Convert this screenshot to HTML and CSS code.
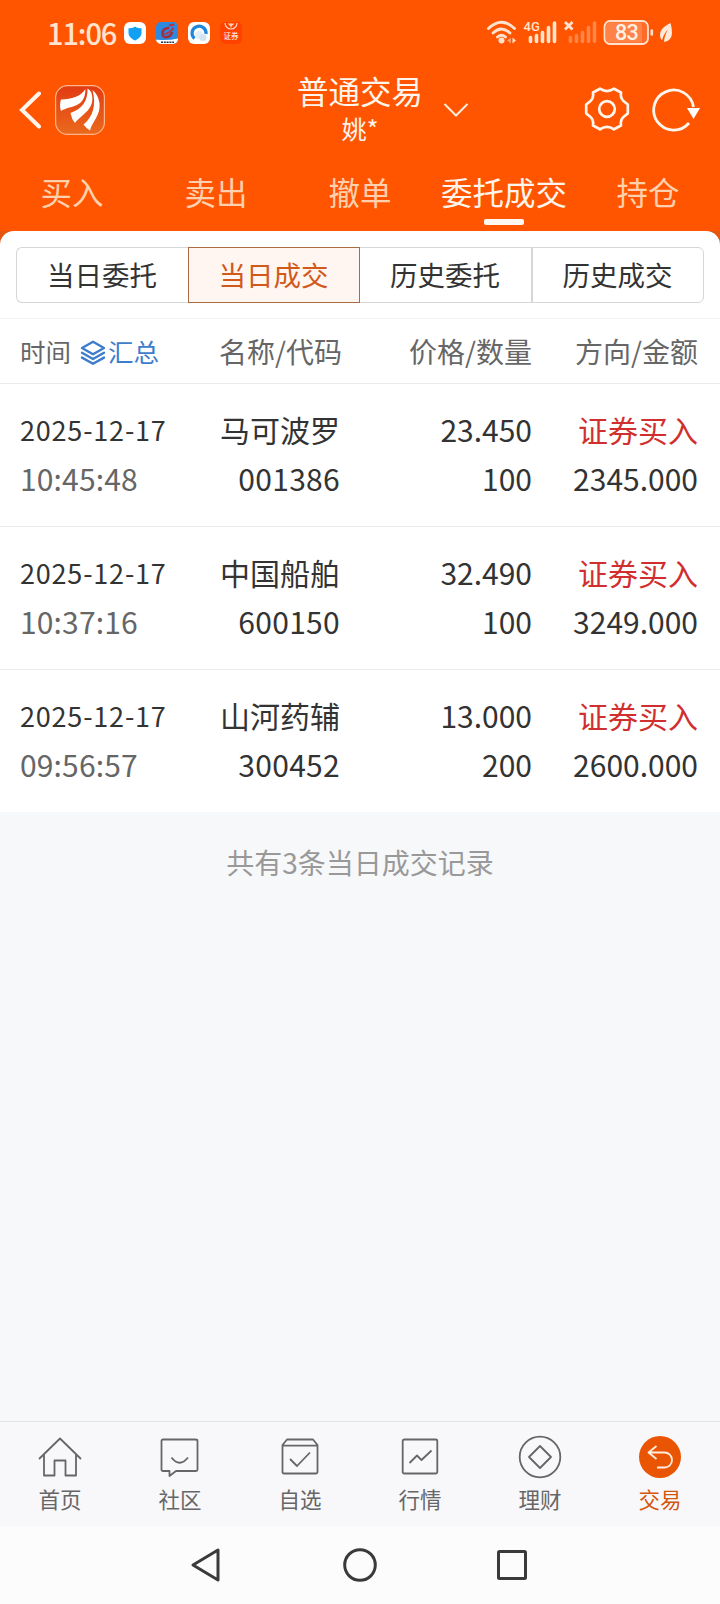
FILE: index.html
```html
<!DOCTYPE html>
<html lang="zh-CN">
<head>
    <meta charset="UTF-8">
    <title>普通交易</title>
    <link rel="stylesheet" href="styles.css">
</head>
<body>
    <div class="app">
        <header class="header">
            <div class="status-bar">
                <div class="status-left">
                    <span class="clock">11:06</span>
                    <svg class="app-icon" viewBox="0 0 22 22">
                        <rect width="22" height="22" rx="6" fill="#fff"/>
                        <path d="M11 4.500C9 6 6.500 6.200 4.500 6.200V11C4.500 14.500 8 17 11 18.500C14 17 17.500 14.500 17.500 11V6.200C15.500 6.200 13 6 11 4.500Z" fill="#12a0f5"/>
                    </svg>
                    <svg class="app-icon" viewBox="0 0 22 22">
                        <rect width="22" height="22" rx="5" fill="#2b8ae0"/>
                        <path d="M0 17.500Q11 19 22 16.500V17a5 5 0 0 1-5 5H5a5 5 0 0 1-5-5Z" fill="#fff"/>
                        <path d="M13 6C8 6 6.500 8.500 6.500 11.500Q6.500 16 11 15Q15.500 14 16 10" fill="none" stroke="#a52c3c" stroke-width="2.500"/>
                        <path d="M8.500 12Q14 11 17.500 6M13 3Q16 4 18 2" fill="none" stroke="#c03038" stroke-width="2"/>
                        <path d="M5 20.200H18" stroke="#234" stroke-width="1.500" stroke-dasharray="2 .8"/>
                    </svg>
                    <svg class="app-icon" viewBox="0 0 22 22">
                        <rect width="22" height="22" rx="6" fill="#fff"/>
                        <path d="M6.500 16.500A7 7 0 1 1 18 12" fill="none" stroke="#2386d8" stroke-width="3.200"/>
                        <circle cx="11" cy="13" r="4" fill="#e3eef6"/>
                        <circle cx="15" cy="15.500" r="3.600" fill="#d3e3f0"/>
                    </svg>
                    <svg class="app-icon" viewBox="0 0 22 22">
                        <rect width="22" height="22" rx="5" fill="#ff4200"/>
                        <path d="M5 1A6 6 0 0 0 17 1M8.500 1.500L11 4L13.500 1.500M11 1V5.500" fill="none" stroke="#ffd9c4" stroke-width="1.100"/>
                        <text x="11" y="16.500" text-anchor="middle" class="icon-text">证券</text>
                    </svg>
                </div>
                <div class="status-right">
                    <svg width="170" height="28" viewBox="0 0 170 28" fill="none" stroke="#ffe3cf" stroke-linecap="round">
                        <path d="M1.500 9.500Q14.500-3 27.500 9.500M6 14Q14.500 6 23 14M10.500 18Q14.500 14.500 18.500 18" stroke-width="2.800"/>
                        <circle cx="14.500" cy="21.500" r="3" fill="#ffe3cf" stroke="none"/>
                        <path d="M24 18.500V24.500L20 21.500Z" fill="#ff9a68" stroke="none"/>
                        <path d="M25.500 18.500L29 21.500L25.500 24.500Z" fill="#ffe3cf" stroke="none"/>
                        <text x="36.500" y="12" class="net-text">4G</text>
                        <path d="M43.500 18.500V22.500M49.500 16.500V22.500M55.500 13.500V22.500M61.500 8.500V22.500M67.500 4V22.500" stroke-width="3.600"/>
                        <path d="M78 3L85.500 10.500M85.500 3L78 10.500" stroke-width="2.800" stroke-linecap="butt"/>
                        <path d="M83.500 18.500V22.500M89.500 16.500V22.500M95.500 13.500V22.500M101.500 8.500V22.500M107.500 4V22.500" stroke="#ff8648" stroke-width="3.600"/>
                        <rect x="117.500" y="2" width="43.500" height="23" rx="5.500" fill="#ff6c29" stroke-width="1.800"/>
                        <path d="M119 7.500Q119 3.500 123 3.500H155V23.500H123Q119 23.500 119 19.500Z" fill="#ff8247" stroke="none"/>
                        <text x="139.500" y="21.300" text-anchor="middle" class="battery-text">83</text>
                        <path d="M164.800 11.500V15.500" stroke-width="2.600"/>
                    </svg>
                    <svg class="leaf" width="14" height="20" viewBox="0 0 14 20">
                        <path d="M11.500 0C7 2.500 1 5.500 1 12Q1 15.500 3 17.500Q4.500 11 9 6.500Q5.500 12 5 19Q13 17.500 13 10Q13 5 11.500 0Z" fill="#ffe9da"/>
                    </svg>
                </div>
            </div>

            <div class="title-bar">
                <div class="title-left">
                    <svg width="22" height="38" viewBox="0 0 22 38">
                        <path d="M20 2.500L3 19L20 35.500" fill="none" stroke="#fff5ec" stroke-width="4" stroke-linecap="round"/>
                    </svg>
                    <svg class="logo" width="50" height="50" viewBox="0 0 50 50">
                        <defs>
                            <linearGradient id="logoBg" x1="0" y1="0" x2="0" y2="1">
                                <stop offset="0" stop-color="#e23a12"/>
                                <stop offset="1" stop-color="#ea6a1c"/>
                            </linearGradient>
                        </defs>
                        <rect x=".6" y=".6" width="48.800" height="48.800" rx="12" fill="url(#logoBg)" stroke="#ffb68a" stroke-width="1.200"/>
                        <path d="M30.500 4C25 12 17 14 6 14.500Q4 20 6 26C15 20 30 24 30.500 4Z" fill="#fff"/>
                        <path d="M32.500 3.500C33 16 27 24 15.500 28Q16.500 34 20 38C27 29 41 24 36.500 8Q35.500 5 32.500 3.500Z" fill="#fff"/>
                        <path d="M37.500 5C41.500 20 38 32 28.500 39.500Q31 43 35 45.500C37 37 46 30 44.500 18Q43 9.500 37.500 5Z" fill="#fff"/>
                    </svg>
                </div>
                <div class="title-center">
                    <div class="title-text">普通交易</div>
                    <div class="account">姚*</div>
                </div>
                <svg class="chevron" width="26" height="16" viewBox="0 0 26 16">
                    <path d="M1.500 2L13 13.500L24.500 2" fill="none" stroke="#ffeede" stroke-width="2"/>
                </svg>
                <div class="title-right">
                    <svg width="46" height="46" viewBox="-23 -22 46 46" fill="none" stroke="#fff5ec" stroke-width="2.700" stroke-linejoin="round">
                        <path d="M20.800-4.500V4.500L17 7.500Q13 11 14 16.500L7 20.300Q0 15.500-7 20.300L-14 16.500Q-13 11-17 7.500L-20.800 4.500V-4.500L-17-7.500Q-13-11-14-16.500L-7-20.300Q0-15.500 7-20.300L14-16.500Q13-11 17-7.500Z"/>
                        <circle r="7.800"/>
                    </svg>
                    <svg width="48" height="46" viewBox="0 0 48 46">
                        <path d="M37 36A20 20 0 1 1 41.500 20" fill="none" stroke="#fff5ec" stroke-width="2.800"/>
                        <path d="M35 21H48L41.500 32Z" fill="#fff"/>
                    </svg>
                </div>
            </div>

            <nav class="tabs">
                <div class="tab">买入</div>
                <div class="tab">卖出</div>
                <div class="tab">撤单</div>
                <div class="tab active">委托成交</div>
                <div class="tab">持仓</div>
            </nav>
        </header>

        <div class="panel-wrap">
            <main class="panel">
                <div class="segments">
                    <div class="segment">当日委托</div>
                    <div class="segment active">当日成交</div>
                    <div class="segment">历史委托</div>
                    <div class="segment">历史成交</div>
                </div>

                <div class="row table-head">
                    <div class="head-time">
                        <span>时间</span>
                        <svg width="26" height="26" viewBox="0 0 26 26" fill="none" stroke="#3d7dcc" stroke-width="2.400" stroke-linejoin="round">
                            <path d="M13 1.800L24 8L13 14.200L2 8Z"/>
                            <path d="M2 12.800L13 19L24 12.800M2 17.600L13 23.800L24 17.600" stroke-linecap="round"/>
                        </svg>
                        <span class="summary">汇总</span>
                    </div>
                    <div class="head-name">名称/代码</div>
                    <div>价格/数量</div>
                    <div>方向/金额</div>
                </div>

                <div class="row record">
                    <div><p class="date">2025-12-17</p><p class="time">10:45:48</p></div>
                    <div><p>马可波罗</p><p class="code">001386</p></div>
                    <div><p>23.450</p><p>100</p></div>
                    <div><p class="buy">证券买入</p><p>2345.000</p></div>
                </div>
                <div class="row record">
                    <div><p class="date">2025-12-17</p><p class="time">10:37:16</p></div>
                    <div><p>中国船舶</p><p class="code">600150</p></div>
                    <div><p>32.490</p><p>100</p></div>
                    <div><p class="buy">证券买入</p><p>3249.000</p></div>
                </div>
                <div class="row record">
                    <div><p class="date">2025-12-17</p><p class="time">09:56:57</p></div>
                    <div><p>山河药辅</p><p class="code">300452</p></div>
                    <div><p>13.000</p><p>200</p></div>
                    <div><p class="buy">证券买入</p><p>2600.000</p></div>
                </div>
            </main>
        </div>

        <div class="total">共有3条当日成交记录</div>

        <nav class="bottom-nav">
            <div class="nav-item">
                <svg width="44" height="44" viewBox="0 0 44 44">
                    <path d="M1 23L22 2.500L43 23M6 19V39.500H16.500V24.500H27.500V39.500H38V19"/>
                </svg>
                <span>首页</span>
            </div>
            <div class="nav-item">
                <svg width="44" height="44" viewBox="0 0 44 44">
                    <path d="M5 3.500H37.500Q39.500 3.500 39.500 5V33.500Q39.500 35 38 35H18L11.500 40V35H5Q3.500 35 3.500 33.500V5Q3.500 3.500 5 3.500ZM13.500 21.500Q21.500 32 30 21.500"/>
                </svg>
                <span>社区</span>
            </div>
            <div class="nav-item">
                <svg width="44" height="44" viewBox="0 0 44 44">
                    <path d="M4.500 9L9 3.500H35L39.500 9V36Q39.500 37.500 38 37.500H6Q4.500 37.500 4.500 36ZM4.500 9.700H39.500M12 23L19 30L32 16.500"/>
                </svg>
                <span>自选</span>
            </div>
            <div class="nav-item">
                <svg width="44" height="44" viewBox="0 0 44 44">
                    <rect x="4.700" y="3.500" width="34.600" height="34" rx="1.500"/>
                    <path d="M11.500 27L19 19.500L23.500 24L33.500 14.500"/>
                </svg>
                <span>行情</span>
            </div>
            <div class="nav-item">
                <svg width="44" height="44" viewBox="0 0 44 44">
                    <circle cx="22" cy="21" r="20.300"/>
                    <path d="M22 10L33 21L22 32L11 21Z"/>
                </svg>
                <span>理财</span>
            </div>
            <div class="nav-item active">
                <svg width="44" height="44" viewBox="0 0 44 44">
                    <circle cx="22" cy="21" r="21" class="disc"/>
                    <path d="M18.500 10L10.500 16.500L18.500 23M10.500 16.500H26.500A7.200 7.200 0 0 1 26.500 31.500H19"/>
                </svg>
                <span>交易</span>
            </div>
        </nav>

        <div class="system-nav">
            <svg width="36" height="36" viewBox="0 0 36 36"><path d="M3 18L28 3V33Z"/></svg>
            <svg width="36" height="36" viewBox="0 0 36 36"><circle cx="18" cy="18" r="15.300"/></svg>
            <svg width="34" height="36" viewBox="0 0 34 36"><rect x="3.500" y="4.500" width="27" height="27" rx="1"/></svg>
        </div>
    </div>
</body>
</html>
```

FILE: styles.css
```css
* {
    box-sizing: border-box;
}

body {
    margin: 0;
    font-family: "Noto Sans CJK SC", sans-serif;
    background-color: #f7f8fa;
    color: #333;
}

svg {
    display: block;
    flex-shrink: 0;
}

.app {
    width: 720px;
    height: 1604px;
    display: flex;
    flex-direction: column;
    overflow: hidden;
}

/* header */
.header {
    height: 231px;
    flex-shrink: 0;
    background-color: #ff5500;
    color: #fff5ec;
}

.status-bar {
    height: 66px;
    display: flex;
    justify-content: space-between;
    align-items: center;
    padding: 0 47px;
}

.status-left {
    display: flex;
    align-items: center;
    gap: 10px;
}

.clock {
    width: 67px;
    font-size: 29px;
    line-height: 30px;
    padding-bottom: 2px;
    letter-spacing: -1.1px;
    font-weight: 500;
    color: #ffe3cf;
    white-space: nowrap;
}

.app-icon {
    width: 22px;
    height: 22px;
}

.icon-text {
    font-size: 7.5px;
    fill: #fff;
}

.status-right {
    display: flex;
    align-items: center;
    gap: 2px;
}

.net-text {
    font-family: Roboto, sans-serif;
    font-size: 13px;
    fill: #ffe3cf;
    stroke: none;
    font-weight: 500;
}

.battery-text {
    font-family: Roboto, sans-serif;
    font-size: 21.5px;
    letter-spacing: -0.8px;
    fill: #fff0e4;
    stroke: none;
    font-weight: 500;
}

.title-bar {
    height: 88px;
    display: grid;
    grid-template-columns: 297px 126px 66px 1fr;
    align-items: center;
}

.title-left {
    display: flex;
    align-items: center;
    gap: 14px;
    padding-left: 19px;
}

.title-center {
    text-align: center;
}

.title-text {
    font-size: 31.5px;
    line-height: 36px;
}

.account {
    font-size: 25px;
    line-height: 41px;
}

.chevron {
    margin-left: 20px;
}

.title-right {
    display: flex;
    align-items: center;
    justify-content: flex-end;
    gap: 22px;
    padding-right: 20px;
}

.tabs {
    height: 77px;
    display: grid;
    grid-template-columns: repeat(5, 1fr);
}

.tab {
    display: flex;
    flex-direction: column;
    align-items: center;
    padding-top: 15px;
    font-size: 31.5px;
    line-height: 44px;
    white-space: nowrap;
    color: #ffd0ad;
}

.tab.active {
    color: #fff5ec;
}

.tab.active::after {
    content: '';
    width: 40px;
    height: 6px;
    margin-top: 6px;
    border-radius: 2px;
    background-color: #fff8f0;
}

/* order list */
.panel-wrap {
    flex-shrink: 0;
    background: linear-gradient(#e2560f 14px, #fff 14px);
}

.panel {
    background-color: #fff;
    border-radius: 14px 14px 0 0;
    padding-top: 16px;
}

.segments {
    display: grid;
    grid-template-columns: repeat(4, 172px);
    height: 56px;
    margin: 0 16px 15px;
}

.segment {
    display: flex;
    align-items: center;
    justify-content: center;
    border: 1px solid #d4d6d8;
    font-size: 27.5px;
    padding: 0 1px 2px 0;
}

.segment:first-child {
    border-right: none;
    border-radius: 6px 0 0 6px;
}

.segment:nth-child(3) {
    border-left: none;
}

.segment:last-child {
    border-radius: 0 6px 6px 0;
}

.segment.active {
    background-color: #fff5f1;
    border-color: #ac6c42;
    color: #d15a1a;
}

.row {
    display: grid;
    grid-template-columns: 160px 160px 192px 166px;
    padding: 0 22px 0 20px;
    border-bottom: 1px solid #ebebed;
    text-align: right;
    white-space: nowrap;
}

.row > div:first-child {
    text-align: left;
}

.table-head {
    height: 66px;
    align-items: center;
    border-top: 1px solid #f4f4f4;
    font-size: 28px;
    line-height: 40px;
    color: #666;
}

.head-time {
    display: flex;
    align-items: center;
    font-size: 25.5px;
}

.head-time svg {
    margin: 4px 2px 0 9px;
}

.head-name {
    margin-right: -2px;
}

.summary {
    color: #3d7dcc;
}

.record {
    height: 143px;
    padding-top: 21px;
    font-size: 30px;
    line-height: 49px;
}

.record:last-child {
    height: 142px;
    border-bottom: none;
}

.record p {
    margin: 0;
}

.record .date {
    font-size: 27px;
    letter-spacing: 0.8px;
}

.record .time {
    color: #666;
    letter-spacing: 0.15px;
}

.record .code {
    letter-spacing: 0.3px;
}

.record .buy {
    color: #d12f2f;
}

.total {
    flex: 1;
    padding-top: 30px;
    text-align: center;
    font-size: 28px;
    line-height: 40px;
    color: #999;
}

/* bottom */
.bottom-nav {
    height: 105px;
    flex-shrink: 0;
    display: grid;
    grid-template-columns: repeat(6, 1fr);
    border-top: 1px solid #e2e3e6;
    background-color: #f8f8fb;
}

.nav-item {
    display: flex;
    flex-direction: column;
    align-items: center;
    padding-top: 14px;
    font-size: 21.5px;
    line-height: 38px;
    color: #666;
}

.nav-item svg {
    fill: none;
    stroke: #666;
    stroke-width: 1.8;
    stroke-linejoin: round;
    overflow: visible;
}

.nav-item.active {
    color: #d4560f;
}

.nav-item.active svg {
    stroke: #ffeede;
}

.nav-item .disc {
    fill: #ea5504;
    stroke: none;
}

.system-nav {
    height: 78px;
    flex-shrink: 0;
    display: grid;
    grid-template-columns: repeat(3, 152px);
    justify-content: center;
    justify-items: center;
    align-items: center;
    background-color: #fcfcfc;
}

.system-nav svg {
    fill: none;
    stroke: #3a3a3a;
    stroke-width: 3;
    stroke-linejoin: round;
}
```
